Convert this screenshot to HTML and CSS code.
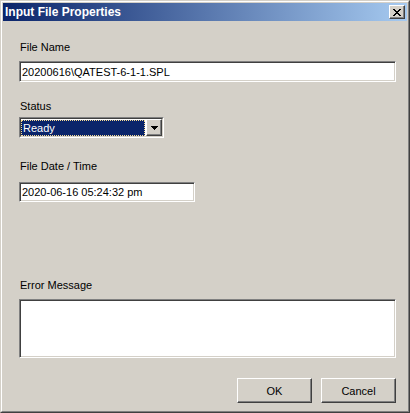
FILE: index.html
```html
<!DOCTYPE html>
<html lang="en">
<head>
    <meta charset="UTF-8">
    <title>Input File Properties</title>
    <link rel="stylesheet" href="styles.css">
</head>
<body>
    <div class="window">
        <div class="frame">
            <div class="titlebar">
                <span class="title">Input File Properties</span>
                <button class="close-btn" type="button" aria-label="Close">
                    <svg width="8" height="7" viewBox="0 0 8 7" shape-rendering="crispEdges">
                        <path fill="#000" d="M0 0h2v1H0z M6 0h2v1H6z M1 1h2v1H1z M5 1h2v1H5z M2 2h4v1H2z M3 3h2v1H3z M2 4h4v1H2z M1 5h2v1H1z M5 5h2v1H5z M0 6h2v1H0z M6 6h2v1H6z"/>
                    </svg>
                </button>
            </div>
            <form class="client">
                <div class="field field-name">
                    <label class="label" for="file-name">File Name</label>
                    <input class="edit edit-wide" id="file-name" type="text" value="20200616\QATEST-6-1-1.SPL">
                </div>
                <div class="field field-status">
                    <span class="label">Status</span>
                    <div class="combo">
                        <div class="combo-inner">
                            <div class="combo-value">Ready</div>
                            <div class="combo-btn">
                                <svg width="7" height="4" viewBox="0 0 7 4" shape-rendering="crispEdges">
                                    <path fill="#000" d="M0 0h7v1H0z M1 1h5v1H1z M2 2h3v1H2z M3 3h1v1H3z"/>
                                </svg>
                            </div>
                        </div>
                    </div>
                </div>
                <div class="field field-date">
                    <label class="label" for="file-date">File Date / Time</label>
                    <input class="edit edit-date" id="file-date" type="text" value="2020-06-16 05:24:32 pm">
                </div>
                <div class="field field-error">
                    <label class="label" for="error-msg">Error Message</label>
                    <textarea class="edit edit-area" id="error-msg"></textarea>
                </div>
                <div class="buttons">
                    <button class="btn" type="submit">OK</button>
                    <button class="btn" type="button">Cancel</button>
                </div>
            </form>
        </div>
    </div>
</body>
</html>
```

FILE: styles.css
```css
* {
    box-sizing: border-box;
}
body {
    margin: 0;
    background: #D4D0C8;
    font-family: "Liberation Sans", Arial, sans-serif;
    font-size: 11px;
    color: #000;
}
.window {
    width: 410px;
    height: 413px;
    border: 1px solid;
    border-color: #D4D0C8 #404040 #404040 #D4D0C8;
    background: #D4D0C8;
}
.frame {
    height: 100%;
    border: 1px solid;
    border-color: #fff #808080 #808080 #fff;
    padding: 1px;
    display: flex;
    flex-direction: column;
}
.titlebar {
    height: 18px;
    display: flex;
    align-items: center;
    padding: 0 2px;
    background: linear-gradient(to right, #0A246A, #A6CAF0);
}
.title {
    flex: 1;
    color: #fff;
    font-weight: bold;
    font-size: 12px;
    line-height: 18px;
}
.close-btn {
    width: 16px;
    height: 14px;
    padding: 0;
    border: 1px solid;
    border-color: #fff #404040 #404040 #fff;
    box-shadow: inset -1px -1px #808080;
    background: #D4D0C8;
    display: flex;
    align-items: center;
    justify-content: center;
}
.client {
    flex: 1;
    margin: 0;
    padding: 20px 0 0 16px;
}
.label {
    display: block;
    line-height: 13px;
    padding-left: 1px;
}
.edit {
    display: block;
    margin: 0;
    padding: 0 2px;
    border: 1px solid;
    border-color: #808080 #fff #fff #808080;
    box-shadow: inset 1px 1px #404040, inset -1px -1px #D4D0C8;
    background: #fff;
    font-family: inherit;
    font-size: 11px;
    color: #000;
    outline: none;
}
.edit-wide {
    width: 377px;
    height: 21px;
}
.edit-date {
    width: 176px;
    height: 20px;
}
.edit-area {
    width: 377px;
    height: 59px;
    resize: none;
    padding: 2px;
}

/* field spacing */
.field-name .label {
    margin-bottom: 7px;
}
.field-status {
    margin-top: 18px;
}
.field-status .label {
    margin-bottom: 4px;
}
.field-date {
    margin-top: 22px;
}
.field-date .label {
    margin-bottom: 9px;
}
.field-error {
    margin-top: 77px;
}
.field-error .label {
    margin-bottom: 7px;
}

.combo {
    width: 145px;
    height: 21px;
    border: 1px solid;
    border-color: #808080 #fff #fff #808080;
    display: flex;
}
.combo-inner {
    flex: 1;
    display: flex;
    border: 1px solid;
    border-color: #404040 #D4D0C8 #D4D0C8 #404040;
    background: #fff;
}
.combo-value {
    flex: 1;
    margin: 1px 1px 0 0;
    padding-left: 1px;
    background: #0A246A;
    color: #fff;
    border: 1px dotted #F5DB95;
    line-height: 14px;
}
.combo-btn {
    width: 16px;
    border: 1px solid;
    border-color: #fff #404040 #404040 #fff;
    box-shadow: inset -1px -1px #808080;
    background: #D4D0C8;
    display: flex;
    align-items: center;
    justify-content: center;
}
.buttons {
    width: 377px;
    margin-top: 20px;
    display: flex;
    justify-content: flex-end;
    gap: 9px;
}
.btn {
    width: 75px;
    height: 25px;
    padding: 0;
    border: 1px solid;
    border-color: #fff #404040 #404040 #fff;
    box-shadow: inset -1px -1px #808080;
    background: #D4D0C8;
    font-family: inherit;
    font-size: 11px;
    color: #000;
}
```
